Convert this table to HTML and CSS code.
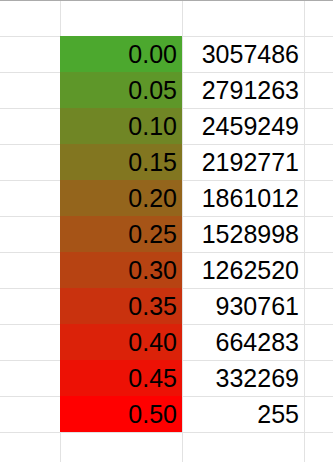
FILE: index.html
```html
<!DOCTYPE html>
<html>
<head>
<meta charset="utf-8">
<link rel="stylesheet" href="styles.css">
</head>
<body>
<div class="sheet">
  <div class="cell"></div><div class="cell"></div><div class="cell"></div><div class="cell"></div>

  <div class="cell"></div><div class="cell num fill" style="--c: rgb(76,168,46)">0.00</div><div class="cell num">3057486</div><div class="cell"></div>
  <div class="cell"></div><div class="cell num fill" style="--c: rgb(94,151,41)">0.05</div><div class="cell num">2791263</div><div class="cell"></div>
  <div class="cell"></div><div class="cell num fill" style="--c: rgb(112,134,37)">0.10</div><div class="cell num">2459249</div><div class="cell"></div>
  <div class="cell"></div><div class="cell num fill" style="--c: rgb(130,118,32)">0.15</div><div class="cell num">2192771</div><div class="cell"></div>
  <div class="cell"></div><div class="cell num fill" style="--c: rgb(148,101,28)">0.20</div><div class="cell num">1861012</div><div class="cell"></div>
  <div class="cell"></div><div class="cell num fill" style="--c: rgb(166,84,23)">0.25</div><div class="cell num">1528998</div><div class="cell"></div>
  <div class="cell"></div><div class="cell num fill" style="--c: rgb(183,67,18)">0.30</div><div class="cell num">1262520</div><div class="cell"></div>
  <div class="cell"></div><div class="cell num fill" style="--c: rgb(201,50,14)">0.35</div><div class="cell num">930761</div><div class="cell"></div>
  <div class="cell"></div><div class="cell num fill" style="--c: rgb(219,34,9)">0.40</div><div class="cell num">664283</div><div class="cell"></div>
  <div class="cell"></div><div class="cell num fill" style="--c: rgb(237,17,5)">0.45</div><div class="cell num">332269</div><div class="cell"></div>
  <div class="cell"></div><div class="cell num fill" style="--c: rgb(255,0,0)">0.50</div><div class="cell num">255</div><div class="cell"></div>

  <div class="cell"></div><div class="cell"></div><div class="cell"></div><div class="cell"></div>
</div>
</body>
</html>
```
FILE: styles.css
```css
html, body {
  margin: 0;
  padding: 0;
  background: #ffffff;
}

body {
  width: 333px;
  height: 462px;
  overflow: hidden;
  font-family: "Liberation Sans", Arial, sans-serif;
}

.sheet {
  display: grid;
  grid-template-columns: 61px 122px 122px 40px;
  grid-auto-rows: 36px;
  border-top: 1px solid #ababab;
}

.cell {
  box-sizing: border-box;
  border-right: 1px solid #e2e2e2;
  border-bottom: 1px solid #e2e2e2;
  font-size: 25px;
  line-height: 35px;
  color: #000000;
  white-space: nowrap;
}

.num {
  text-align: right;
  padding-right: 5px;
}

.fill {
  background: var(--c);
  box-shadow: -1px -1px 0 0 var(--c);
}
```
